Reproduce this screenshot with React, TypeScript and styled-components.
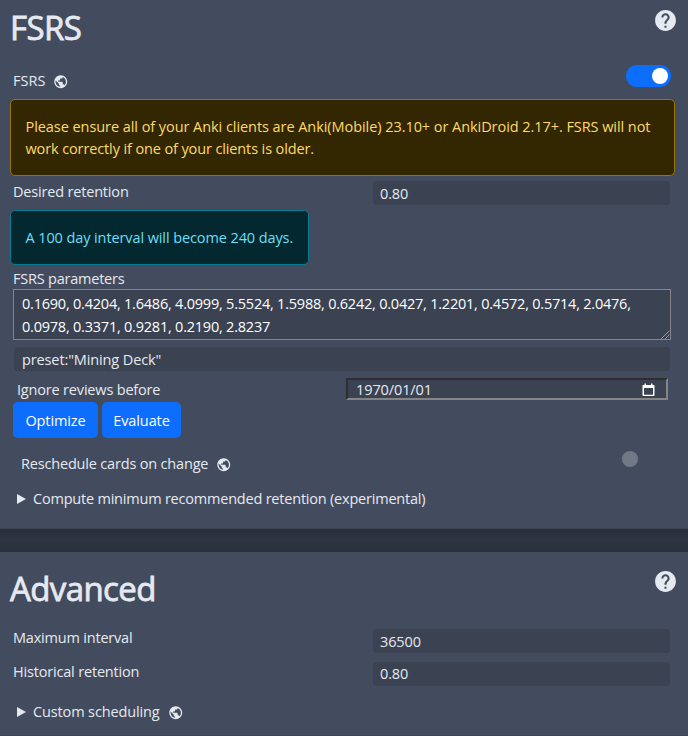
import React from "react";
import styled, { createGlobalStyle } from "styled-components";
import { MdHelp, MdPublic } from "react-icons/md";

const GlobalStyle = createGlobalStyle`
  * { box-sizing: border-box; }
  body {
    margin: 0;
    background: #2e3440;
    color: #e5e9f0;
    font-family: "Segoe UI", "Open Sans", "Noto Sans", sans-serif;
    font-size: 14.5px;
    line-height: 22px;
  }
`;

const Page = styled.main`
  width: 688px;
  height: 736px;
  overflow: hidden;
  display: flex;
  flex-direction: column;
  gap: 23px;
  background: linear-gradient(#2e3440 0 528px, #292e39 528px, #2e3440 540px, #2c323d 552px);
`;

const Section = styled.section<{ $height: number; $top?: number }>`
  flex: none;
  height: ${(p) => p.$height}px;
  padding-top: ${(p) => p.$top ?? 0}px;
  background: #434c5e;
  border-bottom: 1px solid #3d4555;
  display: flex;
  flex-direction: column;
`;

const Header = styled.header`
  height: 54px;
  padding: 0 10px;
  display: flex;
  justify-content: space-between;
`;

const Title = styled.h1`
  margin: 0;
  font-size: 33px;
  font-weight: 400;
  line-height: 56px;
  letter-spacing: -0.6px;
  -webkit-text-stroke: 0.8px currentColor;
`;

const HelpIcon = styled(MdHelp)`
  width: 25px;
  height: 25px;
  margin-top: 8px;
`;

const Row = styled.div<{ $height: number; $left?: number; $right?: number; $gap?: number }>`
  flex: none;
  height: ${(p) => p.$height}px;
  margin-top: ${(p) => p.$gap ?? 0}px;
  padding-left: ${(p) => p.$left ?? 13}px;
  padding-right: ${(p) => p.$right ?? 18}px;
  display: flex;
  align-items: center;
  justify-content: space-between;
`;

const Label = styled.span<{ $spacing?: number; $lift?: number; $drop?: number }>`
  display: flex;
  align-items: center;
  white-space: pre;
  letter-spacing: ${(p) => p.$spacing ?? -0.18}px;
  padding-top: ${(p) => p.$drop ?? 0}px;
  padding-bottom: ${(p) => p.$lift ?? 0}px;
`;

const GlobeIcon = styled(MdPublic)`
  width: 15.5px;
  height: 15.5px;
  margin: 2px 0 0 8px;
`;

const Switch = styled.span`
  width: 45px;
  height: 22px;
  margin-bottom: 9px;
  padding: 0 3px;
  border-radius: 11px;
  background: #0d6efd;
  display: flex;
  align-items: center;
  justify-content: flex-end;
`;

const Knob = styled.i<{ $off?: boolean }>`
  width: 16px;
  height: 16px;
  border-radius: 50%;
  background: ${(p) => (p.$off ? "#717986" : "#fff")};
  margin-bottom: ${(p) => (p.$off ? 10 : 0)}px;
`;

const Notice = styled.div<{ $info?: boolean }>`
  flex: none;
  width: ${(p) => (p.$info ? 299 : 665)}px;
  height: ${(p) => (p.$info ? 55 : 77)}px;
  margin: ${(p) => (p.$info ? "5px 0 0 10px" : "0 0 0 10px")};
  padding: 15.5px 14.5px 0;
  border: 1px solid ${(p) => (p.$info ? "#087990" : "#997404")};
  border-radius: 5px;
  background: ${(p) => (p.$info ? "#032830" : "#332701")};
  color: ${(p) => (p.$info ? "#6edff6" : "#ffda6a")};
`;

const Line = styled.div<{ $spacing: number }>`
  letter-spacing: ${(p) => p.$spacing}px;
  white-space: nowrap;
`;

const Field = styled.div<{ $wide?: boolean }>`
  width: ${(p) => (p.$wide ? 656 : 297)}px;
  height: 24px;
  padding: ${(p) => (p.$wide ? "2px 8px 0" : "1.5px 7px 0")};
  border-radius: 4px;
  background: #3b4252;
  letter-spacing: -0.12px;
`;

const TextArea = styled.div`
  flex: none;
  position: relative;
  width: 658px;
  height: 51px;
  margin-left: 13px;
  padding: 2px 8px;
  border: 1px solid #858585;
  background: #3b4252;
  color: #fff;
  line-height: 23px;
  letter-spacing: -0.22px;
  white-space: pre;
`;

const Grip = styled.svg`
  position: absolute;
  right: 0;
  bottom: 0;
`;

const DateField = styled.div`
  width: 322px;
  height: 22px;
  padding: 1px 11px 0 8px;
  border: 2px solid;
  border-color: #2e2e2e #858585 #858585 #2e2e2e;
  background: #3b4252;
  line-height: 18px;
  letter-spacing: -0.1px;
  display: flex;
  align-items: center;
  justify-content: space-between;
`;

const Actions = styled.div`
  flex: none;
  display: flex;
  gap: 4px;
  margin: 2px 0 0 13px;
`;

const Button = styled.button<{ $width: number }>`
  width: ${(p) => p.$width}px;
  height: 36px;
  padding: 1px 0 0;
  border: 0;
  border-radius: 5px;
  background: #0d6efd;
  color: #fff;
  font: inherit;
  letter-spacing: -0.1px;
`;

const Marker = styled.svg`
  width: 9px;
  height: 10px;
  margin-right: 7px;
  fill: currentColor;
`;

const Triangle = () => (
  <Marker viewBox="0 0 9 10">
    <path d="M0 0L9 5L0 10Z" />
  </Marker>
);

const CalendarIcon = () => (
  <svg width="13" height="14" viewBox="0 0 13 14">
    <path
      d="M2.5 0.5h1.5v1.5h5v-1.5h1.5v1.5h1.2q.8 0 .8.8v9.4q0 .8-.8.8h-10.4q-.8 0-.8-.8v-9.4q0-.8.8-.8h1.2zM2 5v6.7h9v-6.7z"
      fill="#fff"
      fillRule="evenodd"
    />
  </svg>
);

export default function App() {
  return (
    <>
      <GlobalStyle />
      <Page>
        <Section $height={529}>
          <Header>
            <Title>FSRS</Title>
            <HelpIcon />
          </Header>
          <Row $height={37} $gap={8} $right={17}>
            <Label $spacing={0}>FSRS<GlobeIcon /></Label>
            <Switch><Knob /></Switch>
          </Row>
          <Notice>
            <Line $spacing={-0.06}>Please ensure all of your Anki clients are Anki(Mobile) 23.10+ or AnkiDroid 2.17+. FSRS will not</Line>
            <Line $spacing={-0.12}>work correctly if one of your clients is older.</Line>
          </Notice>
          <Row $height={24} $gap={5}>
            <Label $lift={3}>Desired retention</Label>
            <Field>0.80</Field>
          </Row>
          <Notice $info>
            <Line $spacing={-0.1}>A 100 day interval will become 240 days.</Line>
          </Notice>
          <Row $height={24}>
            <Label $drop={4} $spacing={-0.22}>FSRS parameters</Label>
          </Row>
          <TextArea>
            {"0.1690, 0.4204, 1.6486, 4.0999, 5.5524, 1.5988, 0.6242, 0.0427, 1.2201, 0.4572, 0.5714, 2.0476,\n0.0978, 0.3371, 0.9281, 0.2190, 2.8237"}
            <Grip width="9" height="9" viewBox="0 0 9 9">
              <path d="M0.5 8.5L8.5 0.5M4.5 8.5L8.5 4.5" stroke="#d5d7da" strokeDasharray="1 .4" />
            </Grip>
          </TextArea>
          <Row $height={24} $gap={7} $left={14}>
            <Field $wide>preset:"Mining Deck"</Field>
          </Row>
          <Row $height={22} $gap={7} $left={17} $right={20}>
            <Label $drop={2}>Ignore reviews before</Label>
            <DateField>1970/01/01<CalendarIcon /></DateField>
          </Row>
          <Actions>
            <Button $width={85}>Optimize</Button>
            <Button $width={79}>Evaluate</Button>
          </Actions>
          <Row $height={30} $gap={11} $left={21} $right={50}>
            <Label>Reschedule cards on change<GlobeIcon /></Label>
            <Knob $off />
          </Row>
          <Row $height={30} $gap={5} $left={17}>
            <Label $spacing={-0.21}><Triangle />Compute minimum recommended retention (experimental)</Label>
          </Row>
        </Section>
        <Section $height={184} $top={9}>
          <Header>
            <Title>Advanced</Title>
            <HelpIcon />
          </Header>
          <Row $height={24} $gap={14}>
            <Label $lift={7} $spacing={-0.2}>Maximum interval</Label>
            <Field>36500</Field>
          </Row>
          <Row $height={25} $gap={8}>
            <Label $lift={3}>Historical retention</Label>
            <Field>0.80</Field>
          </Row>
          <Row $height={30} $gap={11} $left={17}>
            <Label $spacing={-0.13}><Triangle />Custom scheduling<GlobeIcon /></Label>
          </Row>
        </Section>
      </Page>
    </>
  );
}
